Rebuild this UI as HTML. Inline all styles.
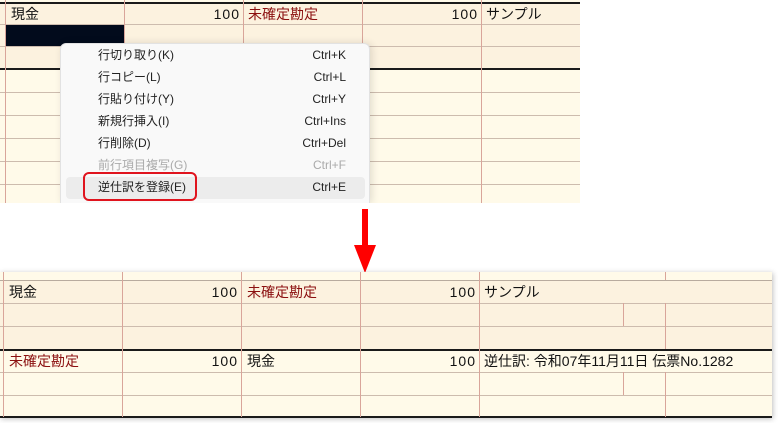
<!DOCTYPE html>
<html><head><meta charset="utf-8"><style>
*{margin:0;padding:0;box-sizing:border-box}
body{width:778px;height:423px;background:#fff;position:relative;overflow:hidden;font-family:"Liberation Sans","Noto Sans CJK JP",sans-serif;font-size:14px;color:#111}
div{position:absolute}
.h{height:1px;background:#cdbcae}
.hd{height:2px;background:#1a1a1a}
.v{width:1px;background:#d9a59a}
.t{line-height:22px;white-space:nowrap}
.r{color:#8b0f0f}
.n{text-align:right;letter-spacing:1px}
.mi{left:60px;width:310px;height:22px;font-size:12px;line-height:22px;color:#222}
.mi span{position:absolute;left:38px}
.mi b{position:absolute;right:24px;font-weight:normal}
</style></head><body>
<div style="left:0;top:0;width:580px;height:203px;background:#fffae9"></div>
<div style="left:0;top:2px;width:580px;height:67px;background:#fcf2df"></div>
<div class="hd" style="left:0;top:2px;width:580px"></div>
<div class="h" style="left:0;top:24px;width:580px"></div>
<div class="h" style="left:0;top:46px;width:580px"></div>
<div class="hd" style="left:0;top:68px;width:580px"></div>
<div class="h" style="left:0;top:92px;width:580px"></div>
<div class="h" style="left:0;top:115px;width:580px"></div>
<div class="h" style="left:0;top:138px;width:580px"></div>
<div class="h" style="left:0;top:161px;width:580px"></div>
<div class="h" style="left:0;top:184px;width:580px"></div>
<div class="v" style="left:5px;top:0;height:203px"></div>
<div class="v" style="left:124px;top:0;height:203px"></div>
<div class="v" style="left:243px;top:0;height:203px"></div>
<div class="v" style="left:362px;top:0;height:203px"></div>
<div class="v" style="left:481px;top:0;height:203px"></div>
<div class="t" style="left:11px;top:3px">現金</div>
<div class="t n" style="left:124px;top:3px;width:116px">100</div>
<div class="t r" style="left:248px;top:3px">未確定勘定</div>
<div class="t n" style="left:362px;top:3px;width:116px">100</div>
<div class="t" style="left:486px;top:3px">サンプル</div>
<div style="left:6px;top:25px;width:118px;height:21px;background:#020b1c"></div>
<div style="left:60px;top:43px;width:310px;height:160px;background:#f9f9f9;border:1px solid #e2e2e2;border-bottom:none;border-radius:6px 6px 0 0;box-shadow:2px 0 8px rgba(0,0,0,.12)"></div>
<div class="mi" style="top:44px"><span>行切り取り(K)</span><b>Ctrl+K</b></div>
<div class="mi" style="top:66px"><span>行コピー(L)</span><b>Ctrl+L</b></div>
<div class="mi" style="top:88px"><span>行貼り付け(Y)</span><b>Ctrl+Y</b></div>
<div class="mi" style="top:110px"><span>新規行挿入(I)</span><b>Ctrl+Ins</b></div>
<div class="mi" style="top:132px"><span>行削除(D)</span><b>Ctrl+Del</b></div>
<div class="mi" style="top:154px;color:#aaa"><span>前行項目複写(G)</span><b>Ctrl+F</b></div>
<div style="left:66px;top:177px;width:299px;height:22px;background:#ececec;border-radius:4px"></div>
<div class="mi" style="top:176px"><span>逆仕訳を登録(E)</span><b>Ctrl+E</b></div>
<div style="left:83px;top:172px;width:114px;height:29px;border:2px solid #e0141e;border-radius:6px"></div>
<div style="left:0;top:203px;width:778px;height:8px;background:#fff"></div>
<div style="left:362px;top:209px;width:6px;height:37px;background:#f00"></div>
<div style="left:354px;top:245px;width:0;height:0;border-left:11px solid transparent;border-right:11px solid transparent;border-top:28px solid #f00"></div>
<div style="left:0;top:272px;width:772px;height:146px;background:#fffae9;box-shadow:1px 1px 5px rgba(0,0,0,.25)"></div>
<div style="left:0;top:280px;width:772px;height:69px;background:#fcf2df"></div>
<div class="h" style="left:0;top:280px;width:772px;background:#b8ab9e"></div>
<div class="h" style="left:0;top:303px;width:772px"></div>
<div class="h" style="left:0;top:326px;width:772px"></div>
<div class="hd" style="left:0;top:349px;width:772px"></div>
<div class="h" style="left:0;top:372px;width:772px"></div>
<div class="h" style="left:0;top:395px;width:772px"></div>
<div class="hd" style="left:0;top:416px;width:772px"></div>
<div class="v" style="left:3px;top:272px;height:145px"></div>
<div class="v" style="left:122px;top:272px;height:145px"></div>
<div class="v" style="left:241px;top:272px;height:145px"></div>
<div class="v" style="left:360px;top:272px;height:145px"></div>
<div class="v" style="left:479px;top:272px;height:145px"></div>
<div class="v" style="left:665px;top:272px;height:8px"></div>
<div class="v" style="left:623px;top:303px;height:23px"></div>
<div class="v" style="left:665px;top:303px;height:46px"></div>
<div class="v" style="left:623px;top:372px;height:23px"></div>
<div class="v" style="left:665px;top:372px;height:45px"></div>
<div class="t" style="left:9px;top:281px">現金</div>
<div class="t n" style="left:122px;top:281px;width:116px">100</div>
<div class="t r" style="left:247px;top:281px">未確定勘定</div>
<div class="t n" style="left:360px;top:281px;width:116px">100</div>
<div class="t" style="left:484px;top:281px">サンプル</div>
<div class="t r" style="left:9px;top:350px">未確定勘定</div>
<div class="t n" style="left:122px;top:350px;width:116px">100</div>
<div class="t" style="left:247px;top:350px">現金</div>
<div class="t n" style="left:360px;top:350px;width:116px">100</div>
<div class="t" style="left:484px;top:350px">逆仕訳: 令和07年11月11日 伝票No.1282</div>
</body></html>
